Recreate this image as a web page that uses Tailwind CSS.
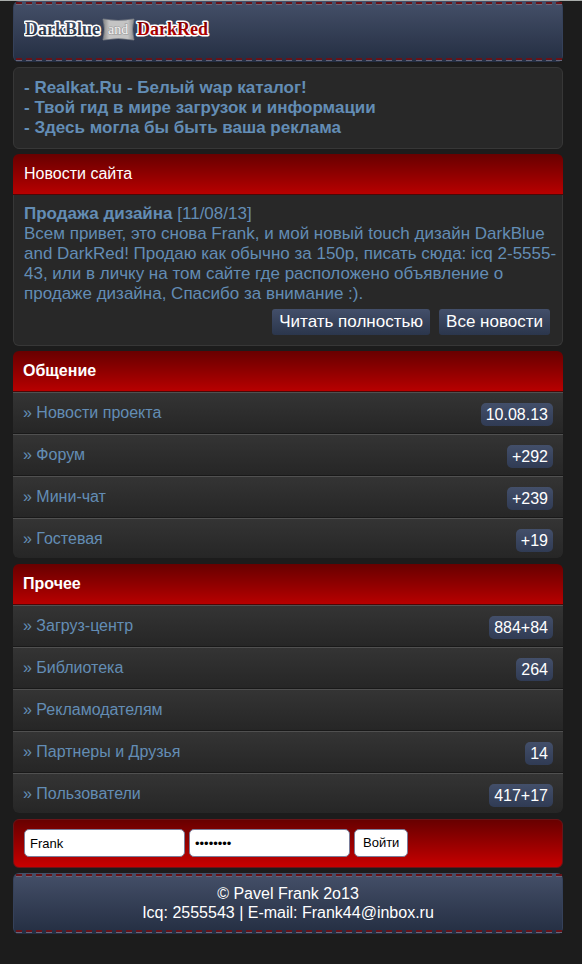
<!DOCTYPE html>
<html lang="ru">
<head>
  <meta charset="UTF-8">
  <meta name="viewport" content="width=device-width, initial-scale=1.0">
  <title>DarkBlue and DarkRed</title>
  <script src="https://cdn.jsdelivr.net/npm/@tailwindcss/browser@4"></script>
</head>
<body class="min-h-screen bg-[#1c1c1c] border-t border-[#a9adab] pl-[13px] pr-[19px] text-base leading-5 text-[#638db5] font-['Liberation_Sans',Arial,sans-serif]">

  <!-- Header -->
  <header class="flex flex-col justify-between h-[61px] rounded-md border-x border-[#35415a] bg-linear-to-b from-[#455069] to-[#242e42] py-px mb-[5px]">
    <svg class="w-full h-[3px]" aria-hidden="true">
      <line x1="2" y1="2.5" x2="100%" y2="2.5" stroke="#666579" stroke-width="1" stroke-dasharray="6 4"/>
      <line x1="2" y1="1" x2="100%" y2="1" stroke="#681218" stroke-width="2" stroke-dasharray="6 4"/>
    </svg>
    <a href="#" class="block pl-[10px] mb-[5px]">
      <svg class="block" width="188" height="24" viewBox="24 17 188 24" role="img" aria-label="DarkBlue and DarkRed">
        <defs>
          <linearGradient id="plate" x1="0" y1="0" x2="1" y2="0">
            <stop offset="0" stop-color="#858585"/>
            <stop offset="0.2" stop-color="#c4c4c4"/>
            <stop offset="0.8" stop-color="#c4c4c4"/>
            <stop offset="1" stop-color="#8b8b8b"/>
          </linearGradient>
          <linearGradient id="blue" x1="0" y1="0" x2="0" y2="1">
            <stop offset="0" stop-color="#4a5670"/>
            <stop offset="1" stop-color="#1f2838"/>
          </linearGradient>
          <linearGradient id="red" x1="0" y1="0" x2="0" y2="1">
            <stop offset="0" stop-color="#780000"/>
            <stop offset="1" stop-color="#c00000"/>
          </linearGradient>
        </defs>
        <path d="M103 19Q118 22 134 19Q131 29 134 40Q118 37 103 40Q106 29 103 19Z" fill="url(#plate)" stroke="#8a8d92" stroke-width="0.6"/>
        <g font-family="Liberation Serif, serif" font-weight="bold" stroke-linejoin="round" paint-order="stroke">
          <text x="25" y="35" font-size="18" fill="url(#blue)" stroke="#fff" stroke-width="3">DarkBlue</text>
          <text x="108" y="34" font-size="14" font-weight="normal" fill="#f4f4f4" stroke="#969696" stroke-width="1">and</text>
          <text x="137" y="35" font-size="18" fill="url(#red)" stroke="#fff" stroke-width="3">DarkRed</text>
        </g>
      </svg>
    </a>
    <svg class="w-full h-[3px]" aria-hidden="true">
      <line x1="2" y1="2.5" x2="100%" y2="2.5" stroke="#666579" stroke-width="1" stroke-dasharray="6 4"/>
      <line x1="2" y1="1" x2="100%" y2="1" stroke="#681218" stroke-width="2" stroke-dasharray="6 4"/>
    </svg>
  </header>

  <!-- Links -->
  <nav class="flex flex-col rounded-md border border-[#373737] bg-[#282828] p-[10px] mb-[5px] text-[17px] font-bold">
    <a href="#">- Realkat.Ru - Белый wap каталог!</a>
    <a href="#">- Твой гид в мире загрузок и информации</a>
    <a href="#">- Здесь могла бы быть ваша реклама</a>
  </nav>

  <!-- News -->
  <section class="mb-[5px]">
    <h2 class="rounded-t-md border-b border-[#4a0808] bg-linear-to-b from-[#680000] to-[#b80000] px-[11px] py-[10px] text-white">Новости сайта</h2>
    <div class="rounded-b-md border border-t-0 border-[#373737] bg-[#282828] pl-[10px] pr-1 pt-[9px] pb-[10px] text-[17px]">
      <p><a href="#" class="font-bold">Продажа дизайна</a> [11/08/13]</p>
      <p>Всем привет, это снова Frank, и мой новый touch дизайн DarkBlue and DarkRed! Продаю как обычно за 150р, писать сюда: icq 2-5555-<wbr>43, или в личку на том сайте где расположено объявление о продаже дизайна, Спасибо за внимание :).</p>
      <div class="flex justify-end gap-[9px] mt-[5px] pr-2 text-white">
        <a href="#" class="rounded-[3px] bg-linear-to-b from-[#434f6a] to-[#2b364c] px-[7px] py-[3px]">Читать полностью</a>
        <a href="#" class="rounded-[3px] bg-linear-to-b from-[#434f6a] to-[#2b364c] px-[7px] py-[3px]">Все новости</a>
      </div>
    </div>
  </section>

  <!-- Menu: communication -->
  <section class="mb-[6px] rounded-md overflow-hidden">
    <h2 class="border-b border-[#4a0808] bg-linear-to-b from-[#680000] to-[#b80000] px-[10px] py-[10px] font-bold text-white">Общение</h2>
    <ul class="flex flex-col gap-px bg-[#191919]">
      <li><a href="#" class="flex items-center justify-between h-[41px] border-t border-[#505050] bg-linear-to-b from-[#343434] to-[#262626] px-[10px]">» Новости проекта <span class="rounded-[5px] bg-linear-to-b from-[#434f6a] to-[#303b54] px-[5px] py-px mt-[3px] leading-[21px] text-white">10.08.13</span></a></li>
      <li><a href="#" class="flex items-center justify-between h-[41px] border-t border-[#505050] bg-linear-to-b from-[#343434] to-[#262626] px-[10px]">» Форум <span class="rounded-[5px] bg-linear-to-b from-[#434f6a] to-[#303b54] px-[5px] py-px mt-[3px] leading-[21px] text-white">+292</span></a></li>
      <li><a href="#" class="flex items-center justify-between h-[41px] border-t border-[#505050] bg-linear-to-b from-[#343434] to-[#262626] px-[10px]">» Мини-чат <span class="rounded-[5px] bg-linear-to-b from-[#434f6a] to-[#303b54] px-[5px] py-px mt-[3px] leading-[21px] text-white">+239</span></a></li>
      <li><a href="#" class="flex items-center justify-between h-10 border-t border-[#505050] bg-linear-to-b from-[#343434] to-[#262626] px-[10px]">» Гостевая <span class="rounded-[5px] bg-linear-to-b from-[#434f6a] to-[#303b54] px-[5px] py-px mt-[3px] leading-[21px] text-white">+19</span></a></li>
    </ul>
  </section>

  <!-- Menu: other -->
  <section class="mb-[6px] rounded-md overflow-hidden">
    <h2 class="border-b border-[#4a0808] bg-linear-to-b from-[#680000] to-[#b80000] px-[10px] py-[10px] font-bold text-white">Прочее</h2>
    <ul class="flex flex-col gap-px bg-[#191919]">
      <li><a href="#" class="flex items-center justify-between h-[41px] border-t border-[#505050] bg-linear-to-b from-[#343434] to-[#262626] px-[10px]">» Загруз-центр <span class="rounded-[5px] bg-linear-to-b from-[#434f6a] to-[#303b54] px-[5px] py-px mt-[3px] leading-[21px] text-white">884+84</span></a></li>
      <li><a href="#" class="flex items-center justify-between h-[41px] border-t border-[#505050] bg-linear-to-b from-[#343434] to-[#262626] px-[10px]">» Библиотека <span class="rounded-[5px] bg-linear-to-b from-[#434f6a] to-[#303b54] px-[5px] py-px mt-[3px] leading-[21px] text-white">264</span></a></li>
      <li><a href="#" class="flex items-center justify-between h-[41px] border-t border-[#505050] bg-linear-to-b from-[#343434] to-[#262626] px-[10px]">» Рекламодателям</a></li>
      <li><a href="#" class="flex items-center justify-between h-[41px] border-t border-[#505050] bg-linear-to-b from-[#343434] to-[#262626] px-[10px]">» Партнеры и Друзья <span class="rounded-[5px] bg-linear-to-b from-[#434f6a] to-[#303b54] px-[5px] py-px mt-[3px] leading-[21px] text-white">14</span></a></li>
      <li><a href="#" class="flex items-center justify-between h-10 border-t border-[#505050] bg-linear-to-b from-[#343434] to-[#262626] px-[10px]">» Пользователи <span class="rounded-[5px] bg-linear-to-b from-[#434f6a] to-[#303b54] px-[5px] py-px mt-[3px] leading-[21px] text-white">417+17</span></a></li>
    </ul>
  </section>

  <!-- Login -->
  <form class="flex gap-1 rounded-md border border-[#6a1418] bg-linear-to-b from-[#680000] to-[#c80000] px-[10px] pt-[9px] pb-[10px] mb-[5px] text-[13px] leading-4 text-black">
    <input type="text" name="login" value="Frank" aria-label="Логин" class="w-[161px] h-7 rounded-[5px] border border-[#7a7d9a] bg-white px-[5px]">
    <input type="password" name="pass" value="password" aria-label="Пароль" class="w-[161px] h-7 rounded-[5px] border border-[#7a7d9a] bg-white px-[5px]">
    <button type="submit" class="h-7 rounded-[5px] border border-[#7a7d9a] bg-white px-2">Войти</button>
  </form>

  <!-- Footer -->
  <footer class="flex flex-col justify-between h-[61px] rounded-md border-x border-[#35415a] bg-linear-to-b from-[#455069] to-[#242e42] py-px text-center leading-[19px] text-white">
    <svg class="w-full h-[3px]" aria-hidden="true">
      <line x1="2" y1="2.5" x2="100%" y2="2.5" stroke="#666579" stroke-width="1" stroke-dasharray="6 4"/>
      <line x1="2" y1="1" x2="100%" y2="1" stroke="#681218" stroke-width="2" stroke-dasharray="6 4"/>
    </svg>
    <p class="mb-[2px]">© Pavel Frank 2o13<br>Icq: 2555543 | E-mail: Frank44@inbox.ru</p>
    <svg class="w-full h-[3px]" aria-hidden="true">
      <line x1="2" y1="2.5" x2="100%" y2="2.5" stroke="#666579" stroke-width="1" stroke-dasharray="6 4"/>
      <line x1="2" y1="1" x2="100%" y2="1" stroke="#681218" stroke-width="2" stroke-dasharray="6 4"/>
    </svg>
  </footer>

</body>
</html>
